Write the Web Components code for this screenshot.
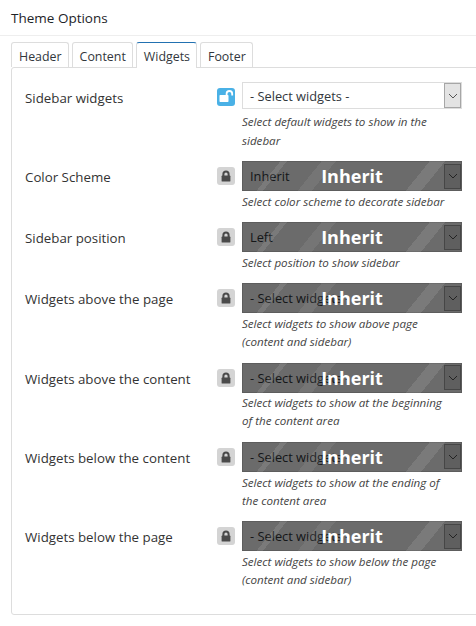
<!DOCTYPE html>
<html>
<head>
<meta charset="utf-8">
<style>
  html, body { margin: 0; padding: 0; background: #fff; overflow: hidden; }
  body { width: 476px; height: 626px; font-family: "Open Sans", "Noto Sans", sans-serif; color: #32373c; }
</style>
</head>
<body>
<theme-options>
  <option-row label="Sidebar widgets" value="- Select widgets -" open>Select default widgets to show in the<br>sidebar</option-row>
  <option-row label="Color Scheme" value="Inherit">Select color scheme to decorate sidebar</option-row>
  <option-row label="Sidebar position" value="Left">Select position to show sidebar</option-row>
  <option-row label="Widgets above the page" value="- Select widgets -">Select widgets to show above page<br>(content and sidebar)</option-row>
  <option-row label="Widgets above the content" value="- Select widgets -">Select widgets to show at the beginning<br>of the content area</option-row>
  <option-row label="Widgets below the content" value="- Select widgets -">Select widgets to show at the ending of<br>the content area</option-row>
  <option-row label="Widgets below the page" value="- Select widgets -">Select widgets to show below the page<br>(content and sidebar)</option-row>
</theme-options>

<script>
// lock / unlock toggle
class LockBadge extends HTMLElement {
  connectedCallback() {
    const open = this.hasAttribute('open');
    const glyph = open
      ? '<path d="M9.6 7V5.8a2.8 2.8 0 0 1 5.6 0V7.4" fill="none" stroke="#fff" stroke-width="1.8"/><rect x="2.5" y="7" width="9" height="7" rx=".7" fill="#fff"/>'
      : '<path d="M6.4 9V7a2.6 2.6 0 0 1 5.2 0V9" fill="none" stroke="#4a4a4a" stroke-width="2"/><rect x="4.6" y="8.6" width="8.8" height="6" rx=".7" fill="#4a4a4a"/>';
    this.attachShadow({ mode: 'open' }).innerHTML = `
      <style>
        :host { display: block; width: 18px; height: 18px; border-radius: 3px; background: ${open ? '#4ab1e6' : '#d4d4d4'}; }
        svg { display: block; }
      </style>
      <svg width="18" height="18" viewBox="0 0 18 18">${glyph}</svg>`;
  }
}
customElements.define('lock-badge', LockBadge);

class FakeSelect extends HTMLElement {
  connectedCallback() {
    const locked = this.hasAttribute('locked');
    this.attachShadow({ mode: 'open' }).innerHTML = `
      <style>
        :host { display: block; position: relative; width: 220px; height: ${locked ? 30 : 27}px; box-sizing: border-box;
          border: 1px solid #ddd; background: #fff; }
        .inner { display: flex; height: 100%; align-items: center; }
        .value { flex: 1; padding-left: 7px; font-size: 12.8px; color: #32373c; white-space: nowrap; overflow: hidden; }
        .arrow { width: 17px; height: 25px; box-sizing: border-box; border: 1px solid #a6a6a6;
          background: #e3e3e3; display: flex; align-items: center; justify-content: center; }
        .mask { position: absolute; inset: -1px; display: flex; align-items: center; justify-content: center;
          background-color: rgba(0,0,0,.58); color: #fff; font-size: 18px; font-weight: 700;
          background-image: linear-gradient(129deg, transparent 30px, rgba(255,255,255,.1) 30px 35px, transparent 35px 62px,
            rgba(255,255,255,.07) 62px 73px, transparent 73px 146px, rgba(255,255,255,.1) 146px 158px, transparent 158px); }
      </style>
      <div class="inner">
        <div class="value">${this.getAttribute('value')}</div>
        <div class="arrow"><svg width="10" height="6" viewBox="0 0 10 6"><path d="M1 1l4 4 4-4" fill="none" stroke="#555" stroke-width="1"/></svg></div>
      </div>
      ${locked ? '<div class="mask">Inherit</div>' : ''}`;
  }
}
customElements.define('fake-select', FakeSelect);

class OptionRow extends HTMLElement {
  connectedCallback() {
    const open = this.hasAttribute('open');
    const value = this.getAttribute('value');
    this.attachShadow({ mode: 'open' }).innerHTML = `
      <style>
        :host { display: grid; grid-template-columns: 192px 25px 220px; align-items: start; }
        .label { font-size: 13.3px; font-weight: 500; color: #333; line-height: 18px; padding-top: 7px; }
        lock-badge { margin-top: 6px; }
        .hint { margin-top: ${open ? 4.4 : 1.6}px; font-size: 11.6px; font-style: italic; line-height: 18.15px; color: #444; white-space: nowrap; }
      </style>
      <div class="label">${this.getAttribute('label')}</div>
      <lock-badge ${open ? 'open' : ''}></lock-badge>
      <div>
        <fake-select value="${value}" ${open ? '' : 'locked'}></fake-select>
        <div class="hint"><slot></slot></div>
      </div>`;
  }
}
customElements.define('option-row', OptionRow);

class ThemeOptions extends HTMLElement {
  connectedCallback() {
    const tabs = ['Header', 'Content', 'Widgets', 'Footer'];
    this.attachShadow({ mode: 'open' }).innerHTML = `
      <style>
        :host { display: block; }
        h2 { margin: 0; padding: 0 11px; height: 35px; line-height: 36px; font-size: 13.5px; font-weight: 500;
          color: #1d2327; border-bottom: 1px solid #eee; }
        .tabs { display: flex; gap: 3px; margin: 6px 0 0 11px; position: relative; z-index: 1; }
        .tab { height: 25px; box-sizing: border-box; padding: 0 6px 0 7px; font-size: 12.4px; line-height: 27px; color: #32373c;
          border: 1px solid #ddd; border-bottom: 0; border-radius: 3px 3px 0 0; }
        .tab.active { background: #fff; border-top: 1px solid #2271b1; height: 26px; margin-bottom: -1px; }
        .panel { margin-left: 11px; width: 490px; height: 548px; box-sizing: border-box; border: 1px solid #ddd; border-radius: 3px;
          padding: 14px 13px; display: flex; flex-direction: column; }
        .rows { display: grid; gap: 11.4px; }
      </style>
      <h2>Theme Options</h2>
      <div class="tabs">${tabs.map((t) => `<div class="tab ${t === 'Widgets' ? 'active' : ''}">${t}</div>`).join('')}</div>
      <div class="panel"><div class="rows"><slot></slot></div></div>`;
  }
}
customElements.define('theme-options', ThemeOptions);
</script>
</body>
</html>
